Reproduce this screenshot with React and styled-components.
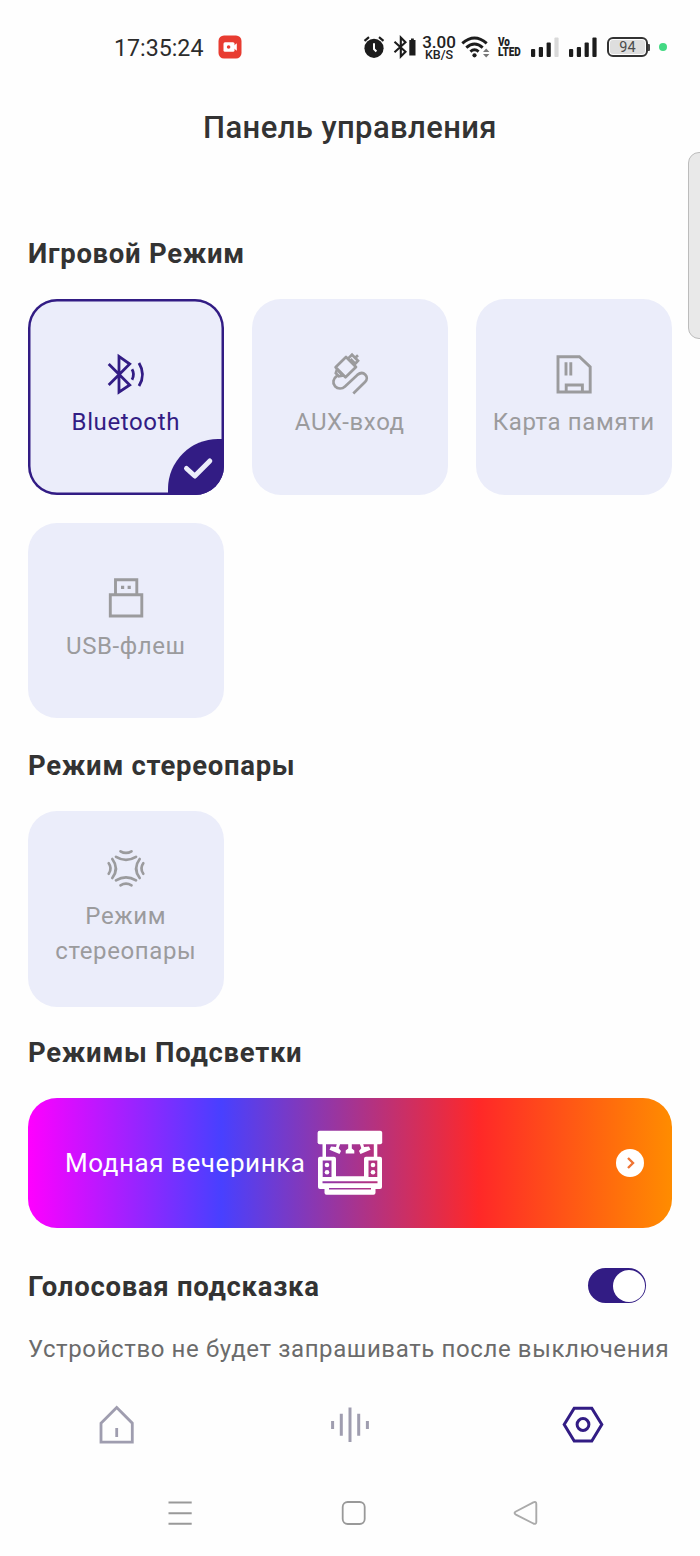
import React from 'react';
import styled, { createGlobalStyle, css } from 'styled-components';

const INDIGO = '#321c84';
const GREY = '#9b9b9d';

const GlobalStyle = createGlobalStyle`
  *, *::before, *::after { box-sizing: border-box; }
  html, body { margin: 0; padding: 0; background: #fefefe; }
  body { font-family: Roboto, "Noto Sans", sans-serif; color: #333; overflow: hidden; }
  svg { display: block; flex: none; }
  h1, h2, p { margin: 0; }
  button { font: inherit; border: 0; background: none; padding: 0; }
`;

const Screen = styled.div`
  position: relative;
  width: 700px;
  height: 1556px;
  overflow: hidden;
  display: flex;
  flex-direction: column;
  background: #fefefe;
`;

const StatusBar = styled.header`
  flex: none;
  height: 92px;
  padding: 2px 33px 0 114px;
  display: flex;
  align-items: center;
  justify-content: space-between;
`;

const StatusGroup = styled.div`
  display: flex;
  align-items: center;
  gap: ${(p) => p.$gap || 0}px;
`;

const Clock = styled.span`
  font-size: 23.2px;
  line-height: 28px;
  padding-top: 1px;
  color: #2c2c2c;
`;

const NetSpeed = styled.span`
  width: 34px;
  display: flex;
  flex-direction: column;
  align-items: center;
  margin: 3px 5px 0 5px;
  color: #222;
  font-weight: 500;
  white-space: nowrap;
`;

const SpeedValue = styled.span`
  font-size: 17px;
  line-height: 12.5px;
`;

const SpeedUnit = styled.span`
  font-size: 12.5px;
  line-height: 13px;
`;

const Volte = styled.span`
  display: flex;
  flex-direction: column;
  width: 23px;
  margin-left: 8px;
  font-size: 12px;
  line-height: 10.5px;
  font-weight: 900;
  color: #222;
  transform: scaleX(0.83);
  transform-origin: left center;
`;

const Battery = styled.span`
  width: 41px;
  height: 20px;
  border: 2px solid #333;
  border-radius: 6px;
  padding: 1px;
  display: flex;
`;

const BatteryLevel = styled.span`
  flex: 1;
  border-radius: 3px;
  background: #dedede;
  color: #4b4b4b;
  font-size: 14.5px;
  line-height: 15px;
  text-align: center;
`;

const BatteryTip = styled.span`
  width: 2px;
  height: 7px;
  background: #444;
  border-radius: 0 1px 1px 0;
`;

const PrivacyDot = styled.span`
  width: 8px;
  height: 8px;
  margin-left: 9px;
  border-radius: 50%;
  background: #43d983;
`;

const Title = styled.h1`
  flex: none;
  height: 72px;
  line-height: 72px;
  text-align: center;
  font-size: 31px;
  font-weight: 500;
  letter-spacing: 0.4px;
`;

const EdgeHandle = styled.div`
  position: absolute;
  top: 152px;
  left: 688px;
  width: 24px;
  height: 187px;
  border: 1px solid #bcbcbc;
  border-radius: 11px;
  background: #e9e9e9;
`;

const Content = styled.main`
  flex: none;
  padding: 0 28px;
  display: flex;
  flex-direction: column;
`;

const SectionTitle = styled.h2`
  height: 36px;
  line-height: 37px;
  margin: ${(p) => p.$top}px 0 ${(p) => p.$bottom ?? 28}px;
  font-size: 27.5px;
  font-weight: 700;
  letter-spacing: 0.71px;
  white-space: nowrap;
`;

const Grid = styled.div`
  display: grid;
  grid-template-columns: repeat(3, 195.6px);
  grid-auto-rows: 195.5px;
  gap: 28px 28.4px;
`;

const Tile = styled.button`
  position: relative;
  overflow: hidden;
  border-radius: 29px;
  background: #ebedfa;
  color: ${GREY};
  display: flex;
  flex-direction: column;
  align-items: center;
  padding-top: ${(p) => (p.$tall ? 33 : 51)}px;
  ${(p) =>
    p.$active &&
    css`
      color: ${INDIGO};
      box-shadow: inset 0 0 0 2.5px ${INDIGO};
    `}
`;

const TileLabel = styled.span`
  margin-top: 7px;
  font-size: 24px;
  line-height: 35px;
  letter-spacing: 0.62px;
  text-align: center;
  white-space: pre-line;
`;

const CheckBadge = styled.span`
  position: absolute;
  right: 0;
  bottom: 0;
  width: 56px;
  height: 56px;
  border-radius: 50px 0 0 0;
  background: ${INDIGO};
`;

const Banner = styled.button`
  height: 130px;
  border-radius: 29px;
  padding: 0 28px 0 37px;
  display: flex;
  align-items: center;
  color: #fff;
  background: linear-gradient(90deg, #ff00ff 0%, #4840ff 30%, #ff2828 70%, #ff8c00 100%);
`;

const BannerText = styled.span`
  width: 250px;
  text-align: left;
  font-size: 26px;
  letter-spacing: 0.56px;
  white-space: nowrap;
`;

const Go = styled.span`
  margin-left: auto;
  width: 28px;
  height: 28px;
  border-radius: 50%;
  background: #fff;
  color: #ef7434;
`;

const SettingRow = styled.div`
  margin-top: 39.5px;
  height: 36px;
  padding-right: 26px;
  display: flex;
  align-items: center;
  justify-content: space-between;
`;

const Switch = styled.span`
  width: 58px;
  height: 35px;
  padding: 1.5px;
  border-radius: 18px;
  background: ${INDIGO};
  display: flex;
  justify-content: flex-end;
`;

const Knob = styled.span`
  width: 32px;
  height: 32px;
  border-radius: 50%;
  background: #fff;
`;

const Hint = styled.p`
  margin-top: 27.5px;
  font-size: 24px;
  line-height: 36px;
  letter-spacing: 0.61px;
  color: #6b6b6b;
  white-space: nowrap;
`;

const TabBar = styled.nav`
  flex: none;
  height: 96px;
  margin-top: 9px;
  display: grid;
  grid-template-columns: repeat(3, 1fr);
  place-items: center;
`;

const SystemNav = styled.nav`
  flex: none;
  height: 40px;
  margin-top: 21px;
  padding: 0 160px 0 166px;
  display: flex;
  align-items: center;
  justify-content: space-between;
`;

function Line({ size = 48, width = 2.9, children }) {
  return (
    <svg width={size} height={size} viewBox={`0 0 ${size} ${size}`} fill="none" stroke="currentColor" strokeWidth={width}>
      {children}
    </svg>
  );
}

const BluetoothIcon = () => (
  <Line width={2.8}>
    <path d="M6.7 14 27.7 35 17 42.2V6.4L27.7 14 6.7 35" />
    <path d="M30 19.3Q33 24.3 30 29.7M37 13Q44 24.5 37 36" />
  </Line>
);

const AuxIcon = () => (
  <Line width={2.7}>
    <path d="M20 7 30 17 19.5 27.3 9.6 17.3Z" strokeLinejoin="round" />
    <path d="M22 8.6 26 4.7 32 10.8 28 15M28.5 8.5 32 5.2M24.5 9 28.5 13" />
    <path d="M11 19.5 9.8 23.2 12.8 26.3 17.5 25.5M12.5 21 15.5 24" />
    <path d="M11.5 25.3C7 28.5 6.2 33 9 36.2C11.8 39 16 39.2 19 36.4L31.3 24.9C37.5 20 44 26.8 39 32L27.3 43.5" />
  </Line>
);

const CardIcon = () => (
  <Line>
    <path d="M8 6.8H29.4L40.2 17V42H8ZM16.2 42V35H32.4V42M16 12.3V25.5M20.8 12.3V25.5" />
  </Line>
);

const UsbIcon = () => (
  <Line>
    <path d="M13.5 20.5V5.7H34.8V20.5M8.3 20.7H39.8V42H8.3Z" />
    <path d="M19 13.4H22.2M25.6 13.4H28.8" strokeWidth="3.2" />
  </Line>
);

const StereoIcon = () => (
  <Line width={2.7}>
    <g strokeLinecap="round">
      <path d="M14 12.8Q24 18.8 34 12.8M18.5 7.3Q24 10.6 29.5 7.3" />
      <path d="M14 36.4Q24 30.4 34 36.4M18.5 41.4Q24 38 29.5 41.4" />
      <path d="M10.3 15Q17.5 24.5 10.3 34M6.7 19.3Q10.5 24.5 6.7 29.7" />
      <path d="M37.7 15Q30.5 24.5 37.7 34M41.3 19.3Q37.5 24.5 41.3 29.7" />
    </g>
  </Line>
);

const CheckIcon = () => (
  <svg width="55" height="55" viewBox="0 0 55 55" fill="none" stroke="#ebedfa" strokeWidth="5" strokeLinecap="round" strokeLinejoin="round">
    <path d="M18.5 29.5 26.8 37 41.8 22" />
  </svg>
);

const StageIcon = () => (
  <svg width="70" height="70" viewBox="0 0 70 70" fill="#fff">
    <rect x="2.6" y="2.8" width="64.6" height="13.4" rx="2" />
    <path d="M7.5 15H11V29H7.5ZM58.8 15H62.3V29H58.8Z" />
    <path d="M5 28.7H19a2 2 0 0 1 2 2V48.3H49V30.7a2 2 0 0 1 2-2H65a2 2 0 0 1 2 2V59a2 2 0 0 1-2 2H60.5V64.8a2 2 0 0 1-2 2H11.5a2 2 0 0 1-2-2V61H5a2 2 0 0 1-2-2V30.7a2 2 0 0 1 2-2ZM7.7 32.5V49H16.5V32.5ZM53.5 32.5V49H62.3V32.5ZM7.5 53.2V55.2H62.5V53.2ZM14 60V61.6H56V60Z" fillRule="evenodd" />
    <circle cx="12" cy="37" r="2.3" /><circle cx="12" cy="44.3" r="2.3" />
    <circle cx="58" cy="37" r="2.3" /><circle cx="58" cy="44.3" r="2.3" />
    <path d="M33.2 15H36.8V20.5L39.3 22.5V25.5H30.7V22.5L33.2 20.5Z" />
    <path d="M22 15H25.5L23.7 20.2 26 23 24.5 26 14.5 21.7 16 18.5 21 19ZM48 15H44.5L46.3 20.2 44 23 45.5 26 55.5 21.7 54 18.5 49 19Z" />
  </svg>
);

const ChevronIcon = () => (
  <svg width="28" height="28" viewBox="0 0 28 28" fill="none" stroke="currentColor" strokeWidth="2.4">
    <path d="M12 9 17 14 12 19" />
  </svg>
);

const RecordIcon = () => (
  <svg width="24" height="24" viewBox="0 0 24 24">
    <rect x=".5" y=".5" width="23" height="23" rx="5.5" fill="#e83c31" />
    <rect x="5.5" y="7.3" width="11" height="9.4" rx="1.5" fill="#fff" />
    <path d="M16 10.5 18.8 8.3V15.7L16 13.5Z" fill="#fff" />
    <circle cx="10.6" cy="12" r="1.8" fill="#e83c31" />
  </svg>
);

const AlarmIcon = () => (
  <svg width="22" height="24" viewBox="0 0 22 24" fill="none" stroke="#1c1c1c">
    <circle cx="11" cy="13.3" r="9.6" fill="#1c1c1c" stroke="none" />
    <path d="M1.5 5.8 6 2.2M20.5 5.8 16 2.2" strokeWidth="2.2" />
    <path d="M11 8.2V14L13.4 16.5" stroke="#fff" strokeWidth="2" />
  </svg>
);

const BluetoothBatteryIcon = () => (
  <svg width="24" height="24" viewBox="0 0 24 24" fill="none" stroke="#1c1c1c" strokeWidth="2.1">
    <path d="M1.5 6.7 12.5 16.8 7.8 21.4V2.6L12.5 7.2 1.5 17.3" />
    <path d="M16.3 5H18V3.4H20.8V5H22.5V20.5H16.3Z" fill="#1c1c1c" stroke="none" />
  </svg>
);

const WifiIcon = () => (
  <svg width="29" height="24" viewBox="0 0 29 24" fill="none" stroke="#1c1c1c" strokeWidth="2.9">
    <path d="M1.3 8.4Q13.5-2.6 25.7 8.4M5.3 12.6Q13.5 5.3 21.7 12.6M9.4 16.6Q13.5 13 17.6 16.6" />
    <circle cx="13.5" cy="20.3" r="2.1" fill="#1c1c1c" stroke="none" />
    <path d="M22 17 25.2 13.4 28.4 17ZM22 19 25.2 22.6 28.4 19Z" fill="#777" stroke="none" />
  </svg>
);

function SignalIcon({ bars }) {
  return (
    <svg width="28" height="20" viewBox="0 0 28 20" fill="#1c1c1c">
      {[8, 10, 14.5, 19.5].map((h, i) => (
        <rect key={h} x={i * 7.8} y={20 - h} width="4.2" height={h} rx="1" fill={i < bars ? '#1c1c1c' : '#d9d9d9'} />
      ))}
    </svg>
  );
}

const HomeIcon = () => (
  <Line width={2.8}>
    <path d="M8 23.2 23.7 7.5 39.3 23.2V42.2H8ZM23.7 28V37" />
  </Line>
);

const WaveIcon = () => (
  <Line width={3}>
    <path d="M6.6 21V29M15.3 13.7V35.7M24 7.5V42M32.7 13.7V35.7M41.4 21V29" />
  </Line>
);

const SettingsIcon = () => (
  <Line width={3}>
    <path d="M5.2 24.5 15.2 8.2H32.8L42.8 24.5 32.8 41H15.2Z" />
    <circle cx="24" cy="24.5" r="5.9" />
  </Line>
);

const SOURCES = [
  { label: 'Bluetooth', Icon: BluetoothIcon, active: true },
  { label: 'AUX-вход', Icon: AuxIcon },
  { label: 'Карта памяти', Icon: CardIcon },
  { label: 'USB-флеш', Icon: UsbIcon },
];

const Tab = styled.button`
  color: ${(p) => (p.$active ? INDIGO : '#9f9daf')};
`;

export default function App() {
  return (
    <Screen>
      <GlobalStyle />
      <StatusBar>
        <StatusGroup $gap={15}>
          <Clock>17:35:24</Clock>
          <RecordIcon />
        </StatusGroup>
        <StatusGroup>
          <StatusGroup $gap={8}>
            <AlarmIcon />
            <BluetoothBatteryIcon />
          </StatusGroup>
          <NetSpeed>
            <SpeedValue>3.00</SpeedValue>
            <SpeedUnit>KB/S</SpeedUnit>
          </NetSpeed>
          <WifiIcon />
          <Volte>
            <span>Vo</span>
            <span>LTED</span>
          </Volte>
          <StatusGroup $gap={10}>
            <span />
            <SignalIcon bars={3} />
            <SignalIcon bars={4} />
            <StatusGroup>
              <Battery>
                <BatteryLevel>94</BatteryLevel>
              </Battery>
              <BatteryTip />
              <PrivacyDot />
            </StatusGroup>
          </StatusGroup>
        </StatusGroup>
      </StatusBar>
      <Title>Панель управления</Title>
      <EdgeHandle />
      <Content>
        <SectionTitle $top={71}>Игровой Режим</SectionTitle>
        <Grid>
          {SOURCES.map(({ label, Icon, active }) => (
            <Tile key={label} $active={active}>
              <Icon />
              <TileLabel>{label}</TileLabel>
              {active && (
                <CheckBadge>
                  <CheckIcon />
                </CheckBadge>
              )}
            </Tile>
          ))}
        </Grid>
        <SectionTitle $top={28.5} $bottom={28.5}>Режим стереопары</SectionTitle>
        <Grid>
          <Tile $tall>
            <StereoIcon />
            <TileLabel>{'Режим\nстереопары'}</TileLabel>
          </Tile>
        </Grid>
        <SectionTitle $top={27.5}>Режимы Подсветки</SectionTitle>
        <Banner>
          <BannerText>Модная вечеринка</BannerText>
          <StageIcon />
          <Go>
            <ChevronIcon />
          </Go>
        </Banner>
        <SettingRow>
          <SectionTitle $top={0} $bottom={0}>Голосовая подсказка</SectionTitle>
          <Switch>
            <Knob />
          </Switch>
        </SettingRow>
        <Hint>Устройство не будет запрашивать после выключения</Hint>
      </Content>
      <TabBar>
        <Tab><HomeIcon /></Tab>
        <Tab><WaveIcon /></Tab>
        <Tab $active><SettingsIcon /></Tab>
      </TabBar>
      <SystemNav>
        <svg width="28" height="28" viewBox="0 0 28 28" stroke="#999" strokeWidth="2">
          <path d="M2.5 3.5H25.7M2.5 14.2H25.7M2.5 24.8H25.7" />
        </svg>
        <svg width="28" height="28" viewBox="0 0 28 28" fill="none" stroke="#999" strokeWidth="1.8">
          <rect x="3.7" y="3" width="22" height="22" rx="5" />
        </svg>
        <svg width="28" height="28" viewBox="0 0 28 28" fill="none" stroke="#aaa" strokeWidth="1.9">
          <path d="M3.9 12.5 21.3 3.4Q24.3 2.2 24.3 5V23Q24.3 25.7 21.3 24.5L3.9 15.6Q1.2 14 3.9 12.5Z" />
        </svg>
      </SystemNav>
    </Screen>
  );
}
